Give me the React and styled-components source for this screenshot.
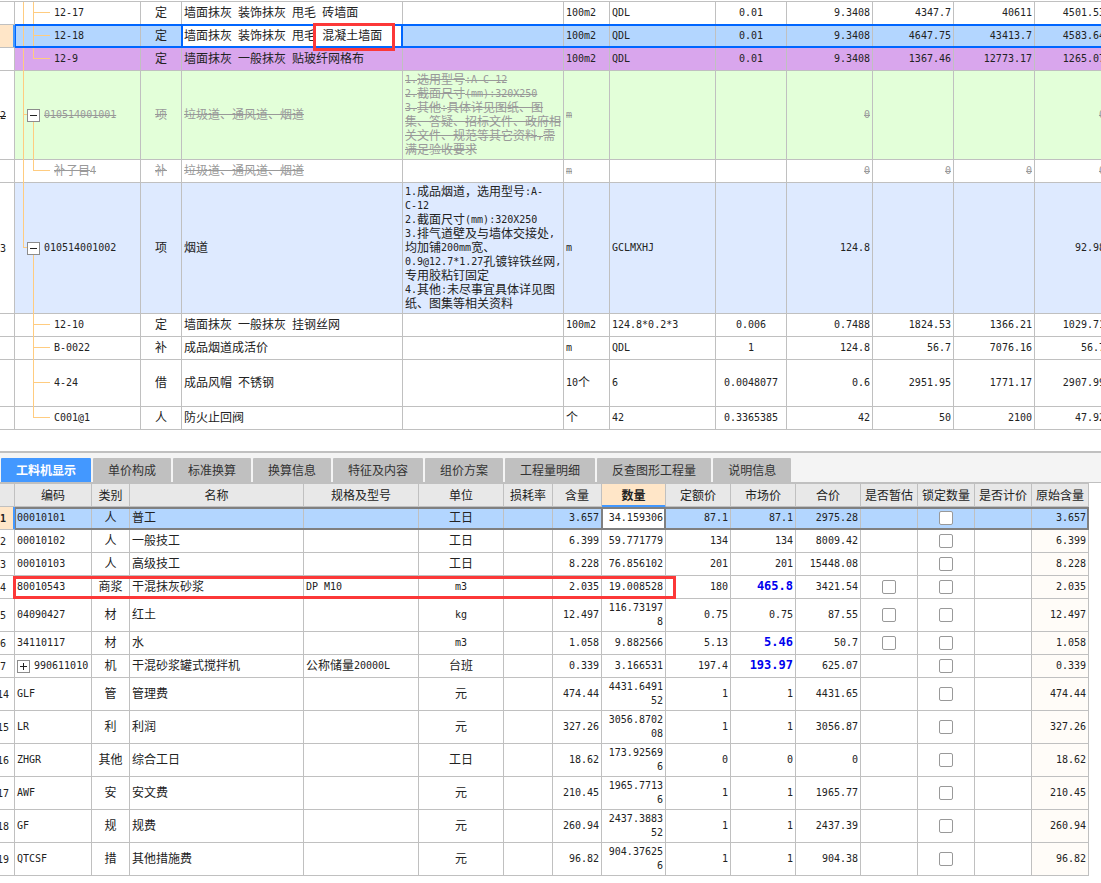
import { useState } from 'react';
import styled, { createGlobalStyle, css } from 'styled-components';

const LINE = '#c0c0c0';
const RED = '#fc3838';
const TREE = '#ffcc80';

const GlobalStyle = createGlobalStyle`
    *,
    *::after {
        box-sizing: border-box;
    }

    body {
        margin: 0;
        background: #fff;
        color: #222;
        font-family: 'Noto Sans CJK SC', sans-serif;
        font-size: 12px;
        line-height: 14px;
    }
`;

const Page = styled.main`
    display: flex;
    flex-direction: column;
    overflow: hidden;
`;

const Pane = styled.section`
    overflow: hidden;
    padding-right: ${({ $gutter }) => $gutter || 0}px;
`;

const BillPane = styled(Pane)`
    padding-top: 1px;
`;

const Table = styled.table`
    width: calc(100% + 8px);
    min-width: ${({ $min }) => $min}px;
    margin-left: -8px;
    table-layout: fixed;
    border-collapse: separate;
    border-spacing: 0;
    border-top: 1px solid ${LINE};
`;

const Wide = styled.span`
    line-height: 12px;
`;

const Latin = styled.span`
    font-family: 'DejaVu Sans Mono', monospace;
    font-size: 10px;
    line-height: 10px;
    vertical-align: 1px;
`;

const HeadCell = styled.th`
    height: 23px;
    padding: 0;
    border-right: 1px solid ${LINE};
    border-bottom: 1px solid ${LINE};
    background: #e8e8e8;
    font-weight: 400;
    text-align: center;
    white-space: nowrap;

    ${({ $active }) => $active && css`
        background: #ffe6c8;
        border-bottom-color: #4398ff;
        box-shadow: inset 0 -1px #4398ff;
        font-weight: 700;
    `}
`;

const Cell = styled.td`
    position: relative;
    height: 23px;
    padding: 1px 2px 3px;
    border-right: 1px solid ${LINE};
    border-bottom: 1px solid ${LINE};
    text-align: ${({ $align }) => $align || 'left'};
    vertical-align: middle;
    white-space: ${({ $wrap }) => ($wrap ? 'normal' : 'pre')};
    word-break: ${({ $wrap }) => ($wrap ? 'break-all' : 'normal')};

    ${({ $changed }) => $changed && css`
        color: #0000ee;
        font-weight: 700;

        ${Latin} {
            font-size: 12px;
        }
    `}

    &::after {
        content: '';
        position: absolute;
        inset: 0 -1px -1px 0;
        pointer-events: none;
        display: none;
    }

    ${({ $mark }) => $mark && css`
        &::after {
            display: block;
            border: 0 solid ${RED};
            border-width: 3px 0;
        }
    `}

    ${({ $mark }) => $mark === 'start' && css`
        &::after {
            left: -2px;
            border-left-width: 3px;
        }
    `}

    ${({ $mark }) => $mark === 'end' && css`
        &::after {
            right: auto;
            width: 10px;
            border-right-width: 3px;
        }
    `}
`;

const CheckCell = styled(Cell)`
    padding: 2px;
`;

const RowHead = styled.th`
    height: 23px;
    padding: 0;
    border-right: 1px solid ${LINE};
    border-bottom: 1px solid ${LINE};
    font-weight: 400;
    text-align: center;
    white-space: nowrap;
`;

const Row = styled.tr`
    height: ${({ $height }) => $height || 23}px;
    color: ${({ $deleted }) => ($deleted ? '#999' : 'inherit')};

    ${Cell} {
        background: ${({ $bg }) => $bg || 'transparent'};
    }

    ${RowHead} {
        color: #222;
    }

    ${({ $deleted }) => $deleted && css`
        ${Wide},
        ${Latin} {
            text-decoration: line-through;
        }
    `}

    ${({ $selected, $frame }) => $selected && css`
        ${RowHead} {
            background: #ffe6c8;
            box-shadow: inset -1px 0 #4398ff;
            border-right-color: #4398ff;
            font-weight: 700;
        }

        ${Cell}::after {
            display: block;
            top: ${$frame.top}px;
            border: 0 solid ${$frame.color};
            border-width: 2px 0;
        }

        ${Cell}:nth-child(2)::after {
            border-left-width: 1px;
        }

        ${Cell}:nth-child(${$frame.focus}) {
            background: #fff;
        }

        ${Cell}:nth-child(${$frame.focus})::after {
            left: -1px;
            border-width: 2px;
        }

        ${Cell}:last-child::after {
            border-right-width: 2px;
        }
    `}
`;

const OriginCell = styled(Cell)`
    && {
        background: ${({ $selected }) => ($selected ? '#b3d6ff' : '#fffcf8')};
    }
`;

const Rail = styled.span`
    position: absolute;
    left: ${({ $level }) => ($level ? 18 : 8)}px;
    top: ${({ $part }) => ($part === 'lower' ? '50%' : 0)};
    bottom: ${({ $part }) => ($part === 'upper' ? '50%' : '-1px')};
    width: 1px;
    background: ${TREE};
`;

const Twig = styled.span`
    position: absolute;
    top: calc(50% - 1px);
    left: ${({ $level }) => ($level ? 18 : 8)}px;
    width: ${({ $level }) => ($level ? 17 : 5)}px;
    height: 1px;
    background: ${TREE};
`;

const CodeLine = styled.span`
    position: relative;
    display: flex;
    align-items: center;
    gap: 4px;
    padding-left: ${({ $indent }) => $indent}px;
`;

const Toggle = styled.button`
    display: grid;
    place-items: center;
    flex: none;
    width: 13px;
    height: 13px;
    margin-top: 2px;
    padding: 0;
    border: 1px solid #8c8c8c;
    background: #fff;
    color: #222;
`;

const Annotated = styled.span`
    position: relative;

    &::after {
        content: '';
        position: absolute;
        z-index: 2;
        inset: -3px -13px -8px -9px;
        border: 3px solid ${RED};
    }
`;

const TabBar = styled.div`
    display: flex;
    gap: 2px;
    margin-top: 21px;
    padding: 5px 1px 0;
    border-top: 2px solid ${LINE};
    border-bottom: 1px solid ${LINE};
    background: #f4f4f4;
`;

const Tab = styled.button`
    height: 24px;
    padding: 0 15px;
    border: 0;
    border-radius: 1px 1px 0 0;
    background: ${({ $active }) => ($active ? '#4398ff' : LINE)};
    color: ${({ $active }) => ($active ? '#fff' : '#333')};
    font: inherit;
    font-weight: ${({ $active }) => ($active ? 700 : 400)};
    white-space: nowrap;
`;

const Check = styled.input`
    appearance: none;
    display: block;
    width: 14px;
    height: 14px;
    margin: 0 auto;
    border: 1px solid #999;
    border-radius: 2px;
    background: #fff;

    &:checked {
        background: #4398ff;
    }
`;

// half-width characters take half the advance of a full-width one
function Text({ children }) {
    return String(children ?? '').split(/([\x20-\x7e]+)/).map((part, i) => {
        if (!part) return null;
        return i % 2 ? <Latin key={i}>{part}</Latin> : <Wide key={i}>{part}</Wide>;
    });
}

function ToggleButton({ open, label }) {
    return (
        <Toggle type="button" aria-label={label} aria-expanded={open}>
            <svg width="11" height="11" viewBox="0 0 11 11" fill="none" stroke="currentColor" shapeRendering="crispEdges">
                <path d={open ? 'M2 5.5h7' : 'M2 5.5h7M5.5 2v7'} />
            </svg>
        </Toggle>
    );
}

const BILL_COLS = [23, 126, 41, null, 161, 46, 106, 71, 86, 81, 81, 73];

const BILL_ROWS = [
    { code: '12-17', outer: 'full', inner: 'full', kind: '定', name: '墙面抹灰 装饰抹灰 甩毛 砖墙面', unit: '100m2', expr: 'QDL', rate: '0.01', nums: ['9.3408', '4347.7', '40611', '4501.53'] },
    { code: '12-18', outer: 'full', inner: 'full', kind: '定', name: '墙面抹灰 装饰抹灰 甩毛 ', marked: '混凝土墙面', unit: '100m2', expr: 'QDL', rate: '0.01', nums: ['9.3408', '4647.75', '43413.7', '4583.64'], selected: true, bg: '#b3d6ff' },
    { code: '12-9', outer: 'full', inner: 'upper', kind: '定', name: '墙面抹灰 一般抹灰 贴玻纤网格布', unit: '100m2', expr: 'QDL', rate: '0.01', nums: ['9.3408', '1367.46', '12773.17', '1265.07'], bg: '#d9a6ed' },
    { no: '2', code: '010514001001', parent: true, outer: 'full', inner: 'lower', kind: '项', name: '垃圾道、通风道、烟道', spec: '1.选用型号:A-C-12\n2.截面尺寸(mm):320X250\n3.其他:具体详见图纸、图\n集、答疑、招标文件、政府相\n关文件、规范等其它资料,需\n满足验收要求', unit: 'm', nums: ['0', '', '', '0'], deleted: true, bg: '#e3ffd9' },
    { code: '补子目4', outer: 'full', inner: 'upper', kind: '补', name: '垃圾道、通风道、烟道', unit: 'm', nums: ['0', '0', '0', '0'], deleted: true },
    { no: '3', code: '010514001002', parent: true, outer: 'upper', inner: 'lower', kind: '项', name: '烟道', spec: '1.成品烟道，选用型号:A-\nC-12\n2.截面尺寸(mm):320X250\n3.排气道壁及与墙体交接处,\n均加铺200mm宽、\n0.9@12.7*1.27孔镀锌铁丝网,\n专用胶粘钉固定\n4.其他:未尽事宜具体详见图\n纸、图集等相关资料', unit: 'm', expr: 'GCLMXHJ', nums: ['124.8', '', '', '92.98'], bg: '#deeaff' },
    { code: '12-10', inner: 'full', kind: '定', name: '墙面抹灰 一般抹灰 挂钢丝网', unit: '100m2', expr: '124.8*0.2*3', rate: '0.006', nums: ['0.7488', '1824.53', '1366.21', '1029.71'] },
    { code: 'B-0022', inner: 'full', kind: '补', name: '成品烟道成活价', unit: 'm', expr: 'QDL', rate: '1', nums: ['124.8', '56.7', '7076.16', '56.7'] },
    { code: '4-24', inner: 'full', kind: '借', name: '成品风帽 不锈钢', unit: '10个', expr: '6', rate: '0.0048077', nums: ['0.6', '2951.95', '1771.17', '2907.99'], height: 47 },
    { code: 'C001@1', inner: 'upper', kind: '人', name: '防火止回阀', unit: '个', expr: '42', rate: '0.3365385', nums: ['42', '50', '2100', '47.92'] },
];

const TABS = ['工料机显示', '单价构成', '标准换算', '换算信息', '特征及内容', '组价方案', '工程量明细', '反查图形工程量', '说明信息'];

const RES_COLS = [23, 77, 38, null, 115, 85, 49, 49, 64, 65, 65, 65, 57, 57, 57, 57];
const RES_HEAD = ['', '编码', '类别', '名称', '规格及型号', '单位', '损耗率', '含量', '数量', '定额价', '市场价', '合价', '是否暂估', '锁定数量', '是否计价', '原始含量'];

// no, code, kind, name, spec, unit, content, quantity, base price, market price, total, flags
const RES_ROWS = [
    ['1', '00010101', '人', '普工', '', '工日', '3.657', '34.159306', '87.1', '87.1', '2975.28', { selected: true }],
    ['2', '00010102', '人', '一般技工', '', '工日', '6.399', '59.771779', '134', '134', '8009.42', {}],
    ['3', '00010103', '人', '高级技工', '', '工日', '8.228', '76.856102', '201', '201', '15448.08', {}],
    ['4', '80010543', '商浆', '干混抹灰砂浆', 'DP M10', 'm3', '2.035', '19.008528', '180', '465.8', '3421.54', { est: true, changed: true, mark: true }],
    ['5', '04090427', '材', '红土', '', 'kg', '12.497', '116.731978', '0.75', '0.75', '87.55', { est: true }],
    ['6', '34110117', '材', '水', '', 'm3', '1.058', '9.882566', '5.13', '5.46', '50.7', { est: true, changed: true }],
    ['7', '990611010', '机', '干混砂浆罐式搅拌机', '公称储量20000L', '台班', '0.339', '3.166531', '197.4', '193.97', '625.07', { changed: true, group: true }],
    ['14', 'GLF', '管', '管理费', '', '元', '474.44', '4431.649152', '1', '1', '4431.65', {}],
    ['15', 'LR', '利', '利润', '', '元', '327.26', '3056.870208', '1', '1', '3056.87', {}],
    ['16', 'ZHGR', '其他', '综合工日', '', '工日', '18.62', '173.925696', '0', '0', '0', {}],
    ['17', 'AWF', '安', '安文费', '', '元', '210.45', '1965.77136', '1', '1', '1965.77', {}],
    ['18', 'GF', '规', '规费', '', '元', '260.94', '2437.388352', '1', '1', '2437.39', {}],
    ['19', 'QTCSF', '措', '其他措施费', '', '元', '96.82', '904.376256', '1', '1', '904.38', {}],
];

function Columns({ widths }) {
    return (
        <colgroup>
            {widths.map((width, i) => <col key={i} width={width ?? undefined} />)}
        </colgroup>
    );
}

function BillRow({ row }) {
    const { parent, outer, inner } = row;
    return (
        <Row
            $bg={row.bg}
            $height={row.height}
            $deleted={row.deleted}
            $selected={row.selected}
            $frame={{ color: '#0066ff', top: -1, focus: 4 }}
        >
            <RowHead scope="row"><Text>{row.no}</Text></RowHead>
            <Cell>
                {outer && <Rail $part={outer} />}
                <Rail $level={1} $part={inner} />
                <Twig $level={parent ? 0 : 1} />
                <CodeLine $indent={parent ? 10 : 37}>
                    {parent && <ToggleButton open label={row.code} />}
                    <span><Text>{row.code}</Text></span>
                </CodeLine>
            </Cell>
            <Cell $align="center"><Text>{row.kind}</Text></Cell>
            <Cell>
                <Text>{row.name}</Text>
                {row.marked && <Annotated><Text>{row.marked}</Text></Annotated>}
            </Cell>
            <Cell><Text>{row.spec}</Text></Cell>
            <Cell><Text>{row.unit}</Text></Cell>
            <Cell><Text>{row.expr}</Text></Cell>
            <Cell $align="center"><Text>{row.rate}</Text></Cell>
            {row.nums.map((num, i) => <Cell key={i} $align="right"><Text>{num}</Text></Cell>)}
        </Row>
    );
}

function ResourceRow({ row }) {
    const [no, code, kind, name, spec, unit, content, quantity, base, market, total, flags] = row;
    const mark = flags.mark ? 'mid' : undefined;
    return (
        <Row
            $bg={flags.selected ? '#b3d6ff' : undefined}
            $selected={flags.selected}
            $frame={{ color: '#808080', top: 0, focus: 9 }}
        >
            <RowHead scope="row"><Text>{no}</Text></RowHead>
            <Cell $mark={mark && 'start'}>
                <CodeLine $indent={0}>
                    {flags.group && <ToggleButton open={false} label={code} />}
                    <span><Text>{code}</Text></span>
                </CodeLine>
            </Cell>
            <Cell $align="center" $mark={mark}><Text>{kind}</Text></Cell>
            <Cell $mark={mark}><Text>{name}</Text></Cell>
            <Cell $mark={mark}><Text>{spec}</Text></Cell>
            <Cell $align="center" $mark={mark}><Text>{unit}</Text></Cell>
            <Cell $mark={mark} />
            <Cell $align="right" $mark={mark}><Text>{content}</Text></Cell>
            <Cell $align="right" $mark={mark} $wrap><Text>{quantity}</Text></Cell>
            <Cell $align="right" $mark={mark && 'end'}><Text>{base}</Text></Cell>
            <Cell $align="right" $changed={flags.changed}><Text>{market}</Text></Cell>
            <Cell $align="right"><Text>{total}</Text></Cell>
            <CheckCell>{flags.est && <Check type="checkbox" aria-label={`${name} 是否暂估`} />}</CheckCell>
            <CheckCell><Check type="checkbox" aria-label={`${name} 锁定数量`} /></CheckCell>
            <Cell />
            <OriginCell $align="right" $selected={flags.selected}><Text>{content}</Text></OriginCell>
        </Row>
    );
}

export default function App() {
    const [tab, setTab] = useState(TABS[0]);

    return (
        <Page>
            <GlobalStyle />
            <BillPane>
                <Table $min={1116}>
                    <Columns widths={BILL_COLS} />
                    <tbody>
                        {BILL_ROWS.map((row) => <BillRow key={row.code} row={row} />)}
                    </tbody>
                </Table>
            </BillPane>
            <TabBar role="tablist">
                {TABS.map((name) => (
                    <Tab key={name} type="button" role="tab" aria-selected={name === tab} $active={name === tab} onClick={() => setTab(name)}>
                        {name}
                    </Tab>
                ))}
            </TabBar>
            <Pane $gutter={12}>
                <Table $min={1000}>
                    <Columns widths={RES_COLS} />
                    <thead>
                        <tr>
                            {RES_HEAD.map((name) => (
                                <HeadCell key={name} $active={name === '数量'}>{name}</HeadCell>
                            ))}
                        </tr>
                    </thead>
                    <tbody>
                        {RES_ROWS.map((row) => <ResourceRow key={row[0]} row={row} />)}
                    </tbody>
                </Table>
            </Pane>
        </Page>
    );
}
